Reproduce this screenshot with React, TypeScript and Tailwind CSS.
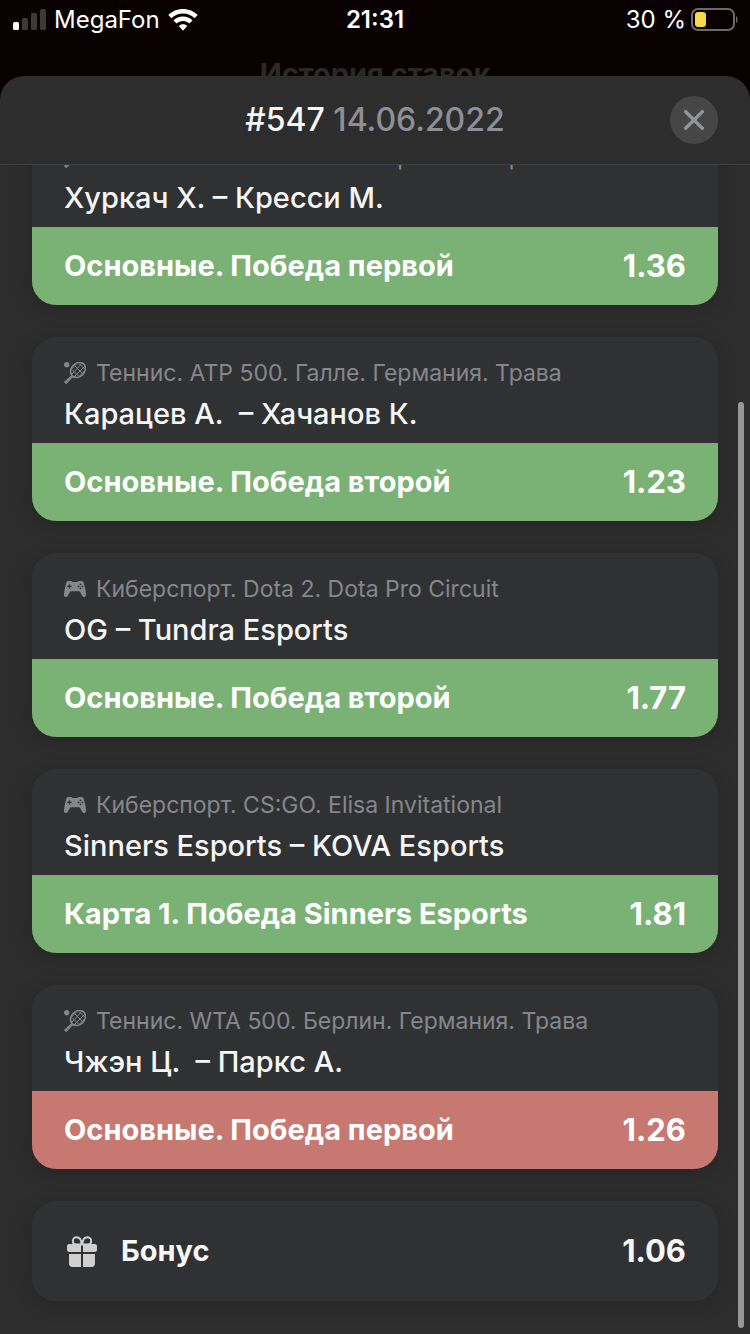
import { useState } from 'react';
import clsx from 'clsx';

type Sport = 'tennis' | 'esports';

interface Bet {
  sport: Sport;
  league: string;
  match: string;
  outcome: string;
  odds: string;
  won: boolean;
}

const bets: Bet[] = [
  {
    sport: 'tennis',
    league: 'Теннис. ATP 500. Галле. Германия. Трава',
    match: 'Хуркач Х. – Кресси М.',
    outcome: 'Основные. Победа первой',
    odds: '1.36',
    won: true,
  },
  {
    sport: 'tennis',
    league: 'Теннис. ATP 500. Галле. Германия. Трава',
    match: 'Карацев А.  – Хачанов К.',
    outcome: 'Основные. Победа второй',
    odds: '1.23',
    won: true,
  },
  {
    sport: 'esports',
    league: 'Киберспорт. Dota 2. Dota Pro Circuit',
    match: 'OG – Tundra Esports',
    outcome: 'Основные. Победа второй',
    odds: '1.77',
    won: true,
  },
  {
    sport: 'esports',
    league: 'Киберспорт. CS:GO. Elisa Invitational',
    match: 'Sinners Esports – KOVA Esports',
    outcome: 'Карта 1. Победа Sinners Esports',
    odds: '1.81',
    won: true,
  },
  {
    sport: 'tennis',
    league: 'Теннис. WTA 500. Берлин. Германия. Трава',
    match: 'Чжэн Ц.  – Паркс А.',
    outcome: 'Основные. Победа первой',
    odds: '1.26',
    won: false,
  },
];

function TennisIcon() {
  return (
    <svg viewBox="0 0 22 22" className="size-[22px] shrink-0" fill="none" stroke="currentColor">
      <circle cx="2.7" cy="2.7" r="2.6" fill="currentColor" stroke="none" />
      <ellipse cx="14" cy="8" rx="8.3" ry="6.6" transform="rotate(-45 14 8)" strokeWidth="1.500" />
      <path d="M8 7.500l6.500 6.500M10.500 3.500l8 8M15 1.500l5.500 5.500M12.500 1.800L7 7.500M18 1.200L8 12M21 4L10.500 14.500M20.500 9L15 14.500" strokeWidth="1" />
      <path d="M7.500 11l.3 3-6.900 6 1.300 1.300 6.300-6.800 3 .2M7.800 14l.7.5" strokeWidth="1.400" strokeLinejoin="round" />
    </svg>
  );
}

function GamepadIcon() {
  return (
    <svg viewBox="0 0 22 16" className="h-4 w-[22px] shrink-0" fill="currentColor">
      <path
        fillRule="evenodd"
        d="M4.500 0H7c.8 0 1 1 1.800 1h4.400C14 1 14.200 0 15 0h2.500c1.300 0 1.900.8 2.300 2.200C21 6 22 10.500 22 13.700c0 1.500-.7 2.300-1.800 2.300-1 0-1.700-.7-2.300-1.800l-1.500-2.700c-.5-.8-1-1.200-1.900-1.200h-7c-.9 0-1.400.4-1.900 1.200l-1.500 2.700C3.500 15.300 2.800 16 1.800 16 .7 16 0 15.200 0 13.700 0 10.500 1 6 2.200 2.200 2.600.8 3.200 0 4.500 0zM4.900 3.200v1.600H3.300V6h1.600v1.600h1.200V6h1.600V4.800H6.100V3.200zM16.500 2.500a.9.9 0 100 1.800.9.9 0 000-1.800zM16.500 6.500a.9.9 0 100 1.800.9.9 0 000-1.800zM14.500 4.500a.9.9 0 100 1.800.9.9 0 000-1.800zM18.500 4.500a.9.9 0 100 1.800.9.9 0 000-1.800z"
      />
    </svg>
  );
}

function GiftIcon() {
  return (
    <svg viewBox="0 0 30 31" className="h-[31px] w-[30px] shrink-0" fill="currentColor">
      <path
        d="M14.500 8.500H9C7 8.500 5.800 7 5.800 5S7.300 1.200 9.500 1.200c3 0 5 2.500 5 7.300zM15.500 8.500H21c2 0 3.200-1.500 3.200-3.500s-1.500-3.800-3.700-3.800c-3 0-5 2.500-5 7.300z"
        fill="none"
        stroke="currentColor"
        strokeWidth="1.900"
      />
      <path d="M2.500 8H14v8H2.500C.8 16 0 15.200 0 13.500v-3C0 8.800.8 8 2.500 8zM16 8h11.500c1.700 0 2.500.8 2.500 2.500v3c0 1.700-.8 2.500-2.500 2.500H16z" />
      <path d="M2 18h12v13H5.500C3.200 31 2 29.800 2 27.500zM16 18h12v9.500c0 2.300-1.200 3.500-3.500 3.500H16z" />
    </svg>
  );
}

function StatusBar() {
  return (
    <div className="grid h-10 grid-cols-3 items-center px-3 text-2xl text-white">
      <div className="flex items-center gap-2">
        <svg viewBox="0 0 34 22" className="h-[22px] w-[34px]" fill="#fff">
          <rect x="1" y="13" width="6" height="8" rx="1.500" />
          <rect x="10" y="9" width="6" height="12" rx="1.500" fillOpacity=".22" />
          <rect x="19" y="4" width="6" height="17" rx="1.500" fillOpacity=".22" />
          <rect x="28" y="0" width="6" height="21" rx="1.500" fillOpacity=".22" />
        </svg>
        <span>MegaFon</span>
        <svg viewBox="0 0 30 22" className="h-[22px] w-[30px]" fill="#fff">
          <path d="M15 0c5.800 0 11 2.200 14.700 6L26.600 9.200C23.600 6.200 19.500 4.500 15 4.500S6.400 6.200 3.400 9.200L.3 6C4 2.200 9.200 0 15 0z" />
          <path d="M15 7.600c3.700 0 7.100 1.400 9.600 3.800l-3.200 3.200c-1.700-1.600-3.900-2.600-6.400-2.600s-4.700 1-6.400 2.600l-3.200-3.200C7.900 9 11.300 7.600 15 7.600z" />
          <path d="M15 15.200c1.700 0 3.200.6 4.300 1.700L15 21.800l-4.300-4.900c1.100-1.100 2.600-1.700 4.300-1.700z" />
        </svg>
      </div>
      <span className="text-center font-semibold">21:31</span>
      <div className="flex items-center justify-end gap-1">
        <span>30 %</span>
        <svg viewBox="0 0 48 24" className="h-6 w-12">
          <rect x="2" y="1" width="42" height="21" rx="6" fill="none" stroke="#6e6a6a" strokeWidth="2" />
          <rect x="5" y="4" width="11" height="15" rx="3" fill="#f9d849" />
          <path d="M46 8c2 .8 2 6.200 0 7z" fill="#6e6a6a" />
        </svg>
      </div>
    </div>
  );
}

function BetCard({ bet }: { bet: Bet }) {
  return (
    <article className="shrink-0 overflow-hidden rounded-3xl bg-[#303133] shadow-[0_4px_20px_rgba(0,0,0,0.18)]">
      <div className="px-8 pt-5 pb-2">
        <p className="flex h-8 items-center gap-2.5 text-[23px] leading-8 whitespace-nowrap text-[#86878c]">
          {bet.sport === 'tennis' ? <TennisIcon /> : <GamepadIcon />}
          {bet.league}
        </p>
        <h2 className="mt-1 text-[29px] leading-[42px] font-medium whitespace-pre text-[#f5f6f6]">{bet.match}</h2>
      </div>
      <div
        className={clsx(
          'flex h-[78px] items-center justify-between px-8 font-bold whitespace-nowrap text-white',
          bet.won ? 'bg-[#7ab174]' : 'bg-[#c77871]'
        )}
      >
        <span className="text-[29px] leading-10">{bet.outcome}</span>
        <span className="text-[31px] leading-10">{bet.odds}</span>
      </div>
    </article>
  );
}

export default function App() {
  const [open, setOpen] = useState(true);

  return (
    <div className="flex h-screen flex-col bg-[#080001] font-['Inter','Liberation_Sans',sans-serif]">
      {/* Page behind the sheet */}
      <div className="h-[76px] shrink-0 overflow-hidden">
        <StatusBar />
        <h1 className="mt-4 text-center text-[29px] leading-9 font-bold text-[#2b2828]">История ставок</h1>
      </div>

      {open && (
        <section className="relative flex min-h-0 grow flex-col overflow-hidden rounded-t-3xl bg-[#2d2d2d]">
          <header className="grid h-[89px] shrink-0 grid-cols-[48px_1fr_48px] items-center border-b border-[#3f3f3f] px-8">
            <h2 className="col-start-2 text-center text-[32px] font-medium whitespace-nowrap text-[#8e8f96]">
              <span className="text-[#f5f6f6]">#547</span> 14.06.2022
            </h2>
            <button
              type="button"
              aria-label="Закрыть"
              onClick={() => setOpen(false)}
              className="flex size-12 items-center justify-center rounded-full bg-[#464646] text-[#93949b]"
            >
              <svg viewBox="0 0 20 20" className="size-5" fill="none" stroke="currentColor" strokeWidth="3.400" strokeLinecap="round">
                <path d="M1.700 1.700l16.600 16.600M18.300 1.700L1.700 18.300" />
              </svg>
            </button>
          </header>

          {/* Reversed column keeps the list scrolled to its end */}
          <div className="flex min-h-0 grow flex-col-reverse overflow-y-auto [scrollbar-width:none]">
            <div className="flex flex-col gap-8 px-8 pt-8 pb-[33px]">
              {bets.map((bet) => (
                <BetCard key={bet.match} bet={bet} />
              ))}
              <div className="flex h-[100px] items-center rounded-3xl bg-[#303133] pr-8 pl-[35px] font-bold text-[#f5f6f6] shadow-[0_4px_20px_rgba(0,0,0,0.18)]">
                <span className="text-[#cfcfcf]">
                  <GiftIcon />
                </span>
                <span className="ml-6 grow text-[29px] leading-10">Бонус</span>
                <span className="text-[31px] leading-10">1.06</span>
              </div>
            </div>
          </div>

          {/* Scroll indicator */}
          <div className="absolute right-1.5 bottom-1.5 h-[926px] w-1.5 rounded-full bg-[#979797]" />
        </section>
      )}
    </div>
  );
}
